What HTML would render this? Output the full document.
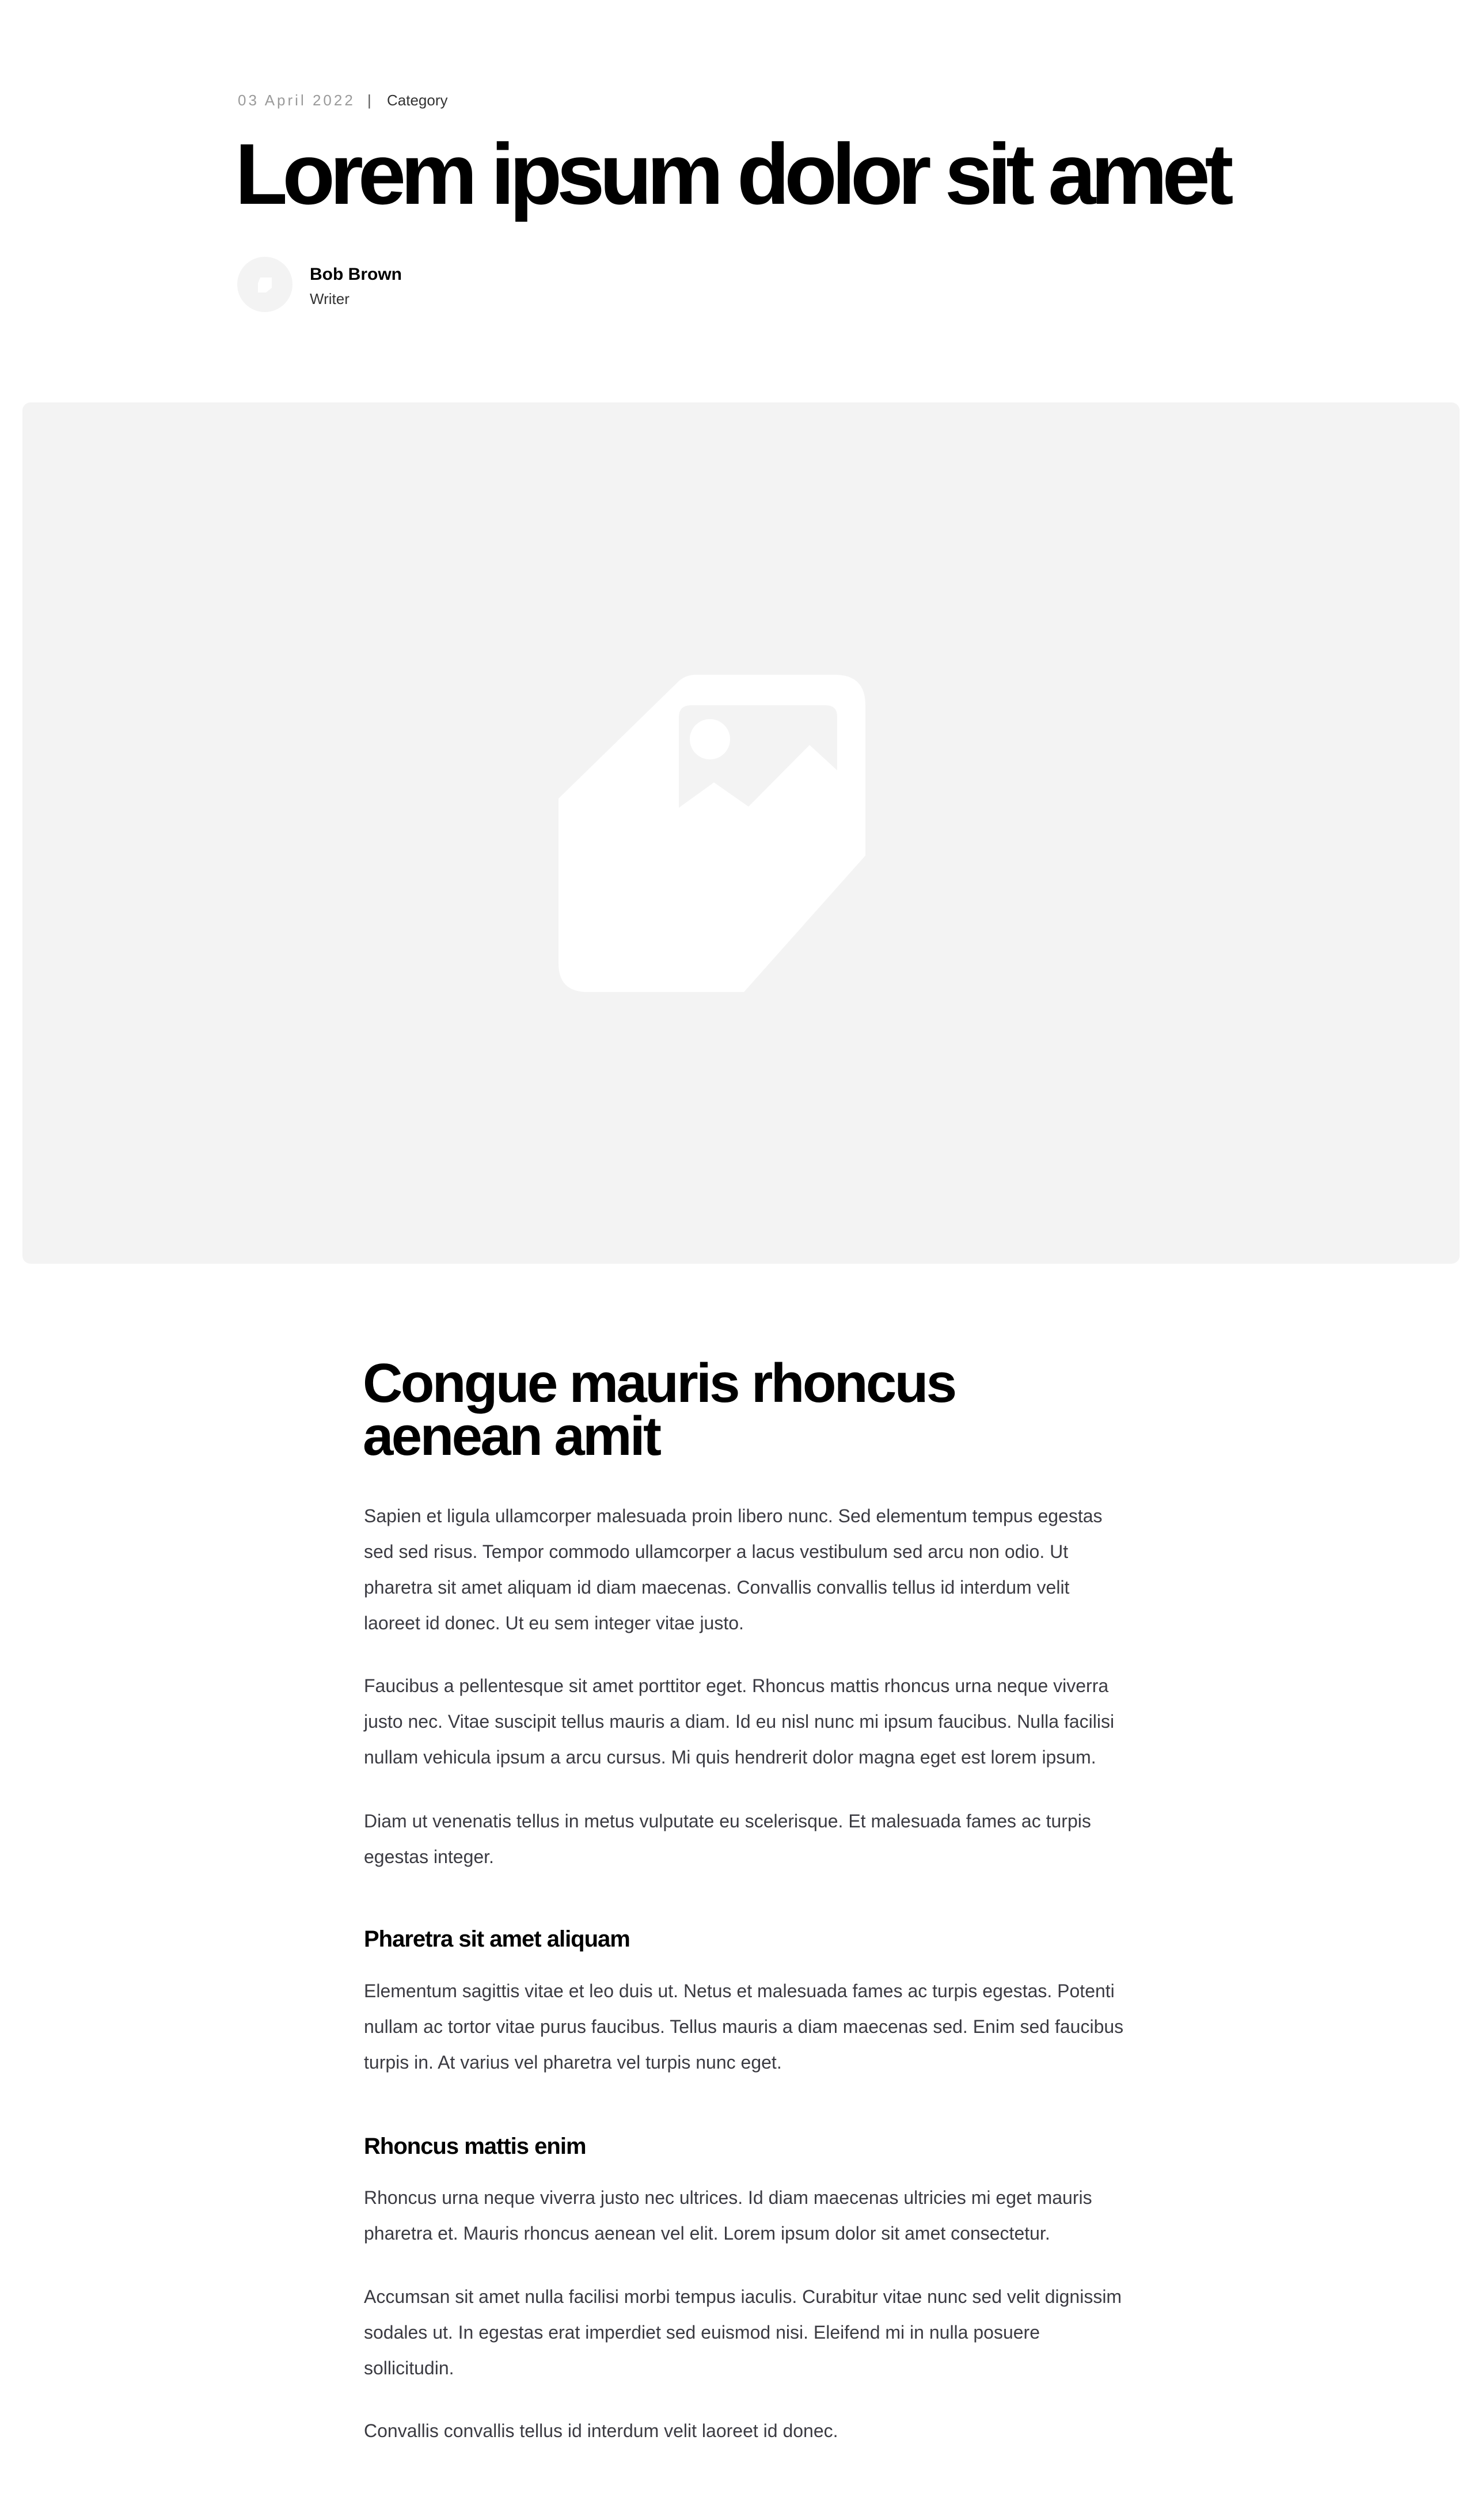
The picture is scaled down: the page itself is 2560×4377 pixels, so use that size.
<!DOCTYPE html>
<html><head><meta charset="utf-8"><style>
html,body{margin:0;padding:0;background:#fff;}
body{width:2560px;height:4377px;position:relative;overflow:hidden;font-family:"Liberation Sans",Arial,sans-serif;}
.a{position:absolute;white-space:nowrap;}
.p{left:632px;font-size:32px;line-height:62px;color:#3b3b42;}
.h3{left:632px;font-size:40px;font-weight:bold;color:#000;letter-spacing:-1px;line-height:50px;}
</style></head><body>
<div class="a" style="left:413px;top:156px;font-size:26px;line-height:36px;color:#9a9a9a;letter-spacing:4px;">03 April 2022</div>
<div class="a" style="left:638px;top:156px;font-size:26px;line-height:36px;color:#555;">|</div>
<div class="a" style="left:672px;top:156px;font-size:26px;line-height:36px;color:#333;">Category</div>
<div class="a" style="left:408px;top:222px;font-size:150px;line-height:160px;font-weight:bold;color:#000;letter-spacing:-9.3px;">Lorem ipsum dolor sit amet</div>
<div class="a" style="left:412px;top:446px;width:96px;height:96px;border-radius:50%;background:#f3f3f3;"></div>
<svg class="a" style="left:442px;top:478px" width="36" height="32" viewBox="0 0 36 32"><path d="M10 4H30V22L20 30H6V14Z" fill="#fff"/></svg>
<div class="a" style="left:538px;top:458px;font-size:30px;line-height:38px;font-weight:bold;color:#000;">Bob Brown</div>
<div class="a" style="left:538px;top:502px;font-size:26px;line-height:34px;color:#333;">Writer</div>
<div class="a" style="left:39px;top:699px;width:2496px;height:1496px;background:#f3f3f3;border-radius:14px;"></div>
<svg class="a" style="left:0;top:0" width="2560" height="2200" viewBox="0 0 2560 2200">
<path d="M1209,1172 H1450 Q1503,1172 1503,1225 V1486 L1292,1723 H1020 Q970,1723 970,1673 V1387 L1180,1182 Q1192,1172 1209,1172 Z" fill="#fff"/>
<path d="M1200,1225 H1434 Q1454,1225 1454,1245 V1403 H1179 V1246 Q1179,1225 1200,1225 Z" fill="#f3f3f3"/>
<path d="M1179,1403 L1240,1359 L1300,1401 L1406,1294 L1454,1338 V1410 H1179 Z" fill="#fff"/>
<circle cx="1233" cy="1284" r="35" fill="#fff"/>
</svg>
<div class="a" style="left:630px;top:2357px;font-size:96px;line-height:92px;font-weight:bold;color:#000;letter-spacing:-3.6px;">Congue mauris rhoncus<br>aenean amit</div>
<div class="a p" style="top:2602px;">Sapien et ligula ullamcorper malesuada proin libero nunc. Sed elementum tempus egestas<br>sed sed risus. Tempor commodo ullamcorper a lacus vestibulum sed arcu non odio. Ut<br>pharetra sit amet aliquam id diam maecenas. Convallis convallis tellus id interdum velit<br>laoreet id donec. Ut eu sem integer vitae justo.</div>
<div class="a p" style="top:2897px;">Faucibus a pellentesque sit amet porttitor eget. Rhoncus mattis rhoncus urna neque viverra<br>justo nec. Vitae suscipit tellus mauris a diam. Id eu nisl nunc mi ipsum faucibus. Nulla facilisi<br>nullam vehicula ipsum a arcu cursus. Mi quis hendrerit dolor magna eget est lorem ipsum.</div>
<div class="a p" style="top:3132px;">Diam ut venenatis tellus in metus vulputate eu scelerisque. Et malesuada fames ac turpis<br>egestas integer.</div>
<div class="a h3" style="top:3343px;">Pharetra sit amet aliquam</div>
<div class="a p" style="top:3427px;">Elementum sagittis vitae et leo duis ut. Netus et malesuada fames ac turpis egestas. Potenti<br>nullam ac tortor vitae purus faucibus. Tellus mauris a diam maecenas sed. Enim sed faucibus<br>turpis in. At varius vel pharetra vel turpis nunc eget.</div>
<div class="a h3" style="top:3703px;">Rhoncus mattis enim</div>
<div class="a p" style="top:3786px;">Rhoncus urna neque viverra justo nec ultrices. Id diam maecenas ultricies mi eget mauris<br>pharetra et. Mauris rhoncus aenean vel elit. Lorem ipsum dolor sit amet consectetur.</div>
<div class="a p" style="top:3958px;">Accumsan sit amet nulla facilisi morbi tempus iaculis. Curabitur vitae nunc sed velit dignissim<br>sodales ut. In egestas erat imperdiet sed euismod nisi. Eleifend mi in nulla posuere<br>sollicitudin.</div>
<div class="a p" style="top:4191px;">Convallis convallis tellus id interdum velit laoreet id donec.</div>
</body></html>
